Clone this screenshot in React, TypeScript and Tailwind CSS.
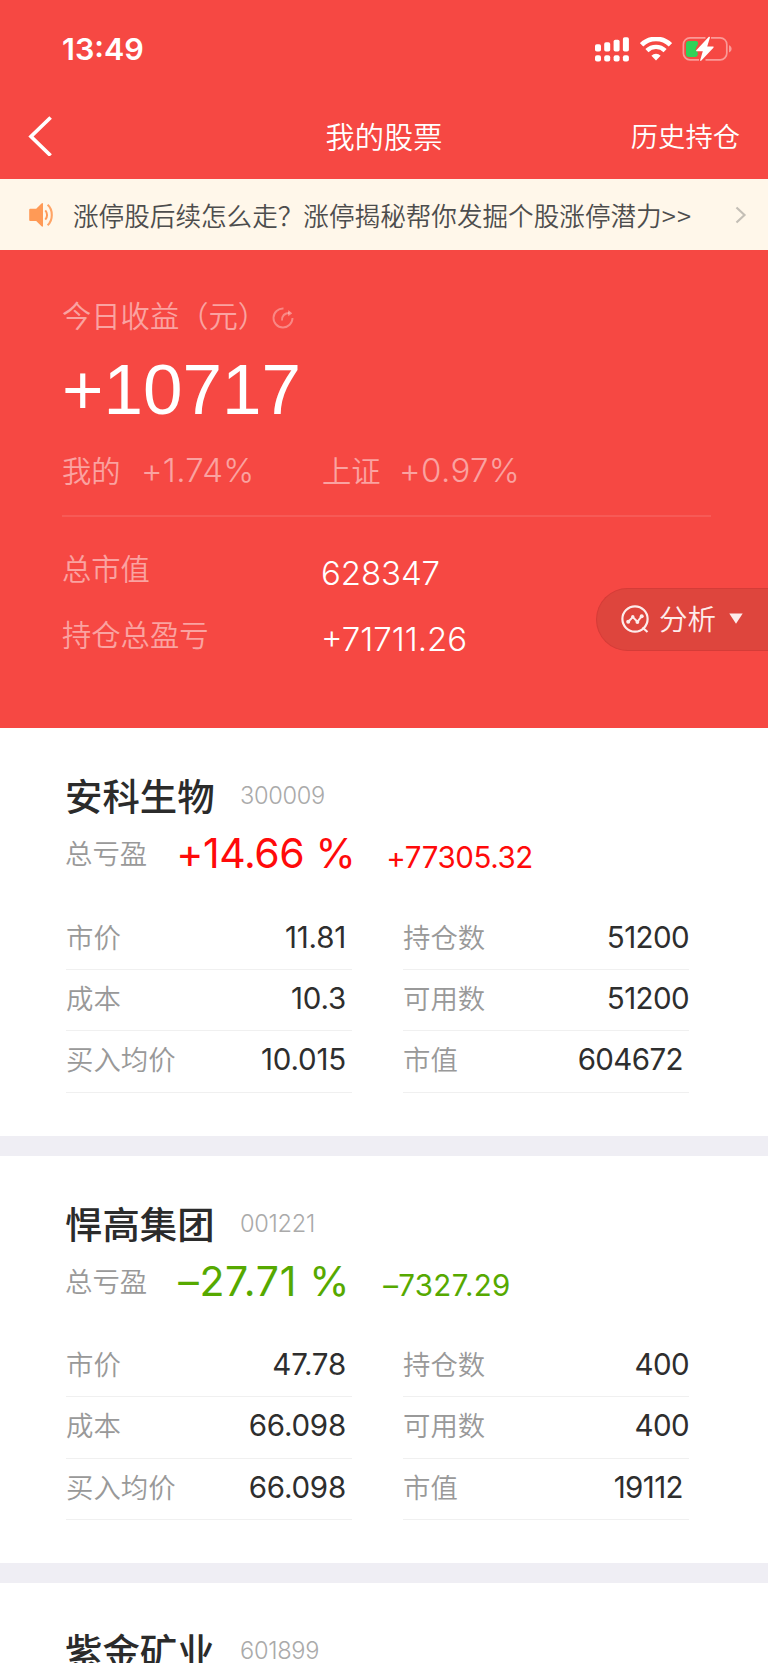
import React from "react";
import clsx from "clsx";

const cjk = "font-['Noto_Sans_CJK_SC',sans-serif]";
const num = "font-['Inter',sans-serif]";

interface Field {
  label: string;
  value: string;
  inset?: boolean;
}

interface Stock {
  name: string;
  code: string;
  percent?: string;
  profit?: string;
  left: Field[];
  right: Field[];
}

const stocks: Stock[] = [
  {
    name: "安科生物",
    code: "300009",
    percent: "+14.66 %",
    profit: "+77305.32",
    left: [
      { label: "市价", value: "11.81" },
      { label: "成本", value: "10.3" },
      { label: "买入均价", value: "10.015" },
    ],
    right: [
      { label: "持仓数", value: "51200" },
      { label: "可用数", value: "51200" },
      { label: "市值", value: "604672", inset: true },
    ],
  },
  {
    name: "悍高集团",
    code: "001221",
    percent: "–27.71 %",
    profit: "–7327.29",
    left: [
      { label: "市价", value: "47.78" },
      { label: "成本", value: "66.098" },
      { label: "买入均价", value: "66.098" },
    ],
    right: [
      { label: "持仓数", value: "400" },
      { label: "可用数", value: "400" },
      { label: "市值", value: "19112", inset: true },
    ],
  },
  {
    name: "紫金矿业",
    code: "601899",
    left: [],
    right: [],
  },
];

function SignalIcon() {
  return (
    <svg width="34" height="25" viewBox="0 0 34 25" fill="#fff">
      <rect x="0" y="7.3" width="6" height="7.2" rx="1.8" />
      <rect x="9.2" y="5.2" width="6" height="9.3" rx="1.8" />
      <rect x="18.6" y="2.8" width="6" height="11.7" rx="1.8" />
      <rect x="27.9" y="0.2" width="6" height="14.3" rx="1.8" />
      <rect x="0" y="18.2" width="6" height="6.2" rx="2" />
      <rect x="9.2" y="18.2" width="6" height="6.2" rx="2" />
      <rect x="18.6" y="18.2" width="6" height="6.2" rx="2" />
      <rect x="27.9" y="18.2" width="6" height="6.2" rx="2" />
    </svg>
  );
}

function WifiIcon() {
  return (
    <svg width="32" height="24" viewBox="0 0 32 24" fill="none" stroke="#fff">
      <path d="M1.6 7.8a20.6 20.6 0 0 1 28.8 0" strokeWidth="4.8" />
      <path d="M6.9 13.6a13 13 0 0 1 18.2 0" strokeWidth="4.4" />
      <path d="M16 23.4l-4.6-4.7a6.6 6.6 0 0 1 9.2 0z" fill="#fff" stroke="none" />
    </svg>
  );
}

function BatteryIcon() {
  return (
    <svg width="50" height="26" viewBox="0 0 50 26" fill="none">
      <path
        d="M17 23.8H8a6.6 6.6 0 0 1-6.6-6.6V8.4A6.6 6.6 0 0 1 8 1.8h15.5M29 1.8h9.2A6.6 6.6 0 0 1 44.8 8.4v8.8a6.6 6.6 0 0 1-6.6 6.6H23.5"
        stroke="#fff"
        strokeOpacity="0.45"
        strokeWidth="1.7"
      />
      <path d="M47 9.2c1.7.6 2.6 2 2.6 3.6s-.9 3-2.6 3.6z" fill="#fff" fillOpacity="0.45" />
      <path d="M7 5h7c1.5 0 2.4 1.2 2 3l-2 4c-1 2 0 3 1.5 3.8.8 2.5.2 5.2-2.5 5.2H7a3 3 0 0 1-3-3V8a3 3 0 0 1 3-3z" fill="#30d158" />
      <path d="M26.6 1L14.3 14.2c-.4.5-.1 1 .5 1h6L18.2 24c-.2.9.6 1.2 1.2.5L31.4 11.7c.5-.6.2-1.1-.5-1.1h-5.7L27.9 1.8c.2-.9-.6-1.5-1.3-.8z" fill="#fff" />
    </svg>
  );
}

function SpeakerIcon() {
  return (
    <svg width="26" height="26" viewBox="0 0 26 26" fill="none">
      <path d="M1.2 6.8h6L12.5 1.5q1.5-1 1.5.5v22q0 1.3-1.5.3L7.2 19h-6q-1 0-1-1V7.8q0-1 1-1z" fill="#ff9a56" />
      <path d="M16.3 8.3c2.3 2.6 2.3 6.8 0 9.4" stroke="#ff9a56" strokeWidth="2" />
      <path d="M18.6 2.8c5.6 4.8 5.6 15.6 0 20.4" stroke="#ff9a56" strokeOpacity=".9" strokeWidth="2.1" />
    </svg>
  );
}

function ShareIcon() {
  return (
    <svg width="22" height="22" viewBox="0 0 22 22" fill="none" stroke="#fff" strokeOpacity="0.35" strokeWidth="1.9">
      <path d="M11.5 1.5A9.5 9.5 0 1 0 20.5 11" />
      <path d="M10 13.5c0-5 2.5-7.5 7.5-7.5" />
      <path d="M16.5 3.6l3.4 2.7-3.4 2.5z" fill="#fff" fillOpacity="0.35" strokeWidth=".5" />
    </svg>
  );
}

function AnalysisIcon() {
  return (
    <svg width="29" height="29" viewBox="0 0 29 29" fill="none" stroke="#fdeceb" strokeWidth="2.2">
      <circle cx="14" cy="14" r="12.6" />
      <path d="M21.5 22.5l5 4.5" />
      <path d="M7.2 16.8l4.6-4.7 4.6 4.7 4.3-5.6" strokeWidth="2" />
      <g fill="#fdeceb" stroke="none">
        <circle cx="7.2" cy="16.8" r="2" />
        <circle cx="11.8" cy="11.8" r="1.7" />
        <circle cx="16.4" cy="17" r="1.9" />
        <circle cx="20.7" cy="11.2" r="2" />
      </g>
    </svg>
  );
}

function StatusBar() {
  return (
    <div className="flex h-[98px] items-start justify-between pt-8 pr-9 pl-[62px]">
      <div className={clsx(num, "text-[30.5px] leading-[34px] font-semibold")}>13:49</div>
      <div className="flex pt-[5px]">
        <SignalIcon />
        <div className="ml-[11px]">
          <WifiIcon />
        </div>
        <div className="-mt-px ml-[10px]">
          <BatteryIcon />
        </div>
      </div>
    </div>
  );
}

function NavBar() {
  return (
    <div className={clsx(cjk, "grid h-[81px] grid-cols-3 items-center pr-7 pb-2 pl-7 font-[350]")}>
      <svg className="mt-0.5" width="25" height="40" viewBox="0 0 25 40" fill="none" stroke="#fff" strokeWidth="3.7">
        <path d="M22.6 1.5L3 20.5l19.6 19" />
      </svg>
      <div className="text-center text-[29.2px] leading-10">我的股票</div>
      <div className="text-right text-[27.3px] leading-10">历史持仓</div>
    </div>
  );
}

function Notice() {
  return (
    <div className="flex h-[71px] items-center bg-[#fff7ea] pl-[29px]">
      <SpeakerIcon />
      <div className={clsx(cjk, "ml-[18px] text-[25.6px] leading-10 font-[350] whitespace-nowrap text-[#4d4d4d]")}>
        涨停股后续怎么走？涨停揭秘帮你发掘个股涨停潜力<span className="tracking-[1.2px]">&gt;&gt;</span>
      </div>
      <svg className="mr-[21px] ml-auto" width="12" height="18" viewBox="0 0 12 18" fill="none" stroke="#c4bfb6" strokeWidth="2.2">
        <path d="M1.5 1.5L9.5 9l-8 7.5" />
      </svg>
    </div>
  );
}

function Summary() {
  return (
    <section className="relative h-[478px] pt-[45px] pl-[62px]">
      <div className={clsx(cjk, "flex h-10 items-center text-[29.3px] font-[350] text-white/50")}>
        今日收益（元）
        <div className="mt-1.5 ml-[5px]">
          <ShareIcon />
        </div>
      </div>
      <div className="mt-[19px] h-[72px] font-['Liberation_Sans',sans-serif] text-[71px] leading-[72px]">+10717</div>
      <div className="mt-6 flex h-10 font-[350] text-white/50">
        <div className={clsx(cjk, "w-[79px] text-[29.3px] leading-[39px]")}>我的</div>
        <div className={clsx(num, "w-[181px] text-[33px] leading-10 tracking-[0.3px]")}>+1.74%</div>
        <div className={clsx(cjk, "w-[77px] text-[29.3px] leading-[39px]")}>上证</div>
        <div className={clsx(num, "text-[33px] leading-10 tracking-[0.4px]")}>+0.97%</div>
      </div>
      <div className="mt-[25px] h-0.5 w-[649px] bg-white/10" />
      <div className="mt-[19px] grid grid-cols-[259px_1fr] font-[350]">
        <div className={clsx(cjk, "h-[65px] text-[29.3px] leading-[63px] text-white/50")}>总市值</div>
        <div className={clsx(num, "h-[65px] text-[33px] leading-[75px] tracking-[-0.1px]")}>628347</div>
        <div className={clsx(cjk, "h-[65px] text-[29.3px] leading-[64px] text-white/50")}>持仓总盈亏</div>
        <div className={clsx(num, "h-[65px] text-[33px] leading-[76px]")}>+71711.26</div>
      </div>
      {/* floating analysis button docked to the right edge */}
      <button className="absolute top-[338px] right-0 flex h-[63px] w-[172px] items-center rounded-l-full border border-r-0 border-[#d53c38] bg-[#de453d] pl-6 text-[#fdeceb]">
        <AnalysisIcon />
        <span className={clsx(cjk, "-mt-[3px] ml-[9px] text-[28.5px] leading-10 font-[350]")}>分析</span>
        <svg className="-mt-0.5 ml-[13px]" width="14" height="11" viewBox="0 0 14 11" fill="#fdeceb">
          <path d="M.3.5h13.4L7 10.8z" />
        </svg>
      </button>
    </section>
  );
}

function FieldColumn({ fields, className }: { fields: Field[]; className?: string }) {
  return (
    <div className={clsx("w-[286px]", className)}>
      {fields.map((f) => (
        <div key={f.label} className={clsx("flex h-[61.4px] justify-between border-b border-[#f0f0f0]", f.inset && "pr-1.5")}>
          <span className={clsx(cjk, "text-[27.4px] leading-[55px] font-[350] tracking-normal text-[#999]")}>{f.label}</span>
          <span className={clsx(num, "text-[29.5px] leading-[57px] text-[#2e2e2e]")}>{f.value}</span>
        </div>
      ))}
    </div>
  );
}

function StockCard({ stock }: { stock: Stock }) {
  const rising = stock.percent?.startsWith("+");
  return (
    <article className="h-[427.5px] border-b-[20px] border-[#efeef4] bg-white pt-[42px] pl-[66px]">
      <div className="flex h-[52px] items-start">
        <h2 className={clsx(cjk, "-ml-px w-[175px] text-[37.4px] leading-[50px] font-medium text-[#2b2b2b]")}>{stock.name}</h2>
        <span className={clsx(num, "text-[23.6px] leading-[52px] font-light tracking-[-0.3px] text-[#aaa]")}>{stock.code}</span>
      </div>
      {stock.percent && (
        <>
          <div className={clsx("flex h-[60px] items-start", rising ? "text-[#ff0a0a]" : "text-[#56a900]")}>
            <span className={clsx(cjk, "-ml-px text-[27.4px] leading-[60px] font-[350] text-[#999]")}>总亏盈</span>
            <span
              className={clsx(
                num,
                "text-[41px] leading-[62px] whitespace-pre",
                rising ? "ml-[29px] tracking-[-0.4px]" : "ml-[31px] tracking-[0.7px]"
              )}
            >
              {stock.percent}
            </span>
            <span
              className={clsx(
                num,
                "text-[29.5px] leading-[70px]",
                rising ? "ml-[31px] tracking-[-0.4px]" : "ml-[33px] tracking-[0.3px]"
              )}
            >
              {stock.profit}
            </span>
          </div>
          <div className="mt-[26.5px] flex gap-[51px]">
            <FieldColumn fields={stock.left} className="tracking-[-0.2px] *:pr-1.5" />
            <FieldColumn fields={stock.right} className="tracking-[-0.6px]" />
          </div>
        </>
      )}
    </article>
  );
}

export default function App() {
  return (
    <main className="h-[1663px] w-[768px] overflow-hidden bg-white">
      <header className="bg-[#f64843] text-white">
        <StatusBar />
        <NavBar />
        <Notice />
        <Summary />
      </header>
      {stocks.map((stock) => (
        <StockCard key={stock.code} stock={stock} />
      ))}
    </main>
  );
}
